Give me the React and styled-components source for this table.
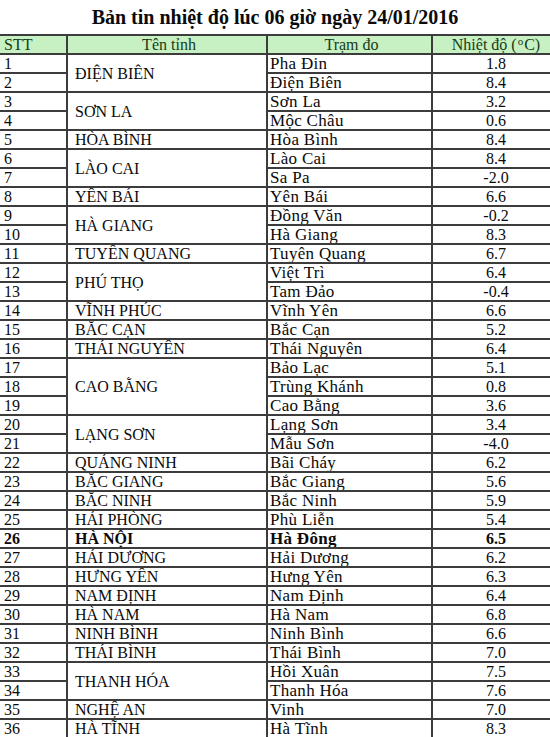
import React from 'react';
import styled, { createGlobalStyle } from 'styled-components';

const GlobalStyle = createGlobalStyle`
  html, body {
    margin: 0;
    padding: 0;
    background: #fff;
    overflow: hidden;
  }
  body {
    font-family: "Liberation Serif", "Times New Roman", serif;
    color: #0a0a0a;
  }
`;

const Page = styled.div`
  width: 550px;
  overflow: hidden;
`;

const Title = styled.h1`
  margin: 0;
  height: 34px;
  display: flex;
  align-items: center;
  justify-content: center;
  font-size: 20px;
  font-weight: bold;
  color: #0a0a0a;
`;

const Grid = styled.div`
  display: grid;
  width: 557px;
  grid-template-columns: 68px 200px 165px 124px;
  grid-template-rows: repeat(37, 19px);
  border-top: 2px solid #3c3c3c;
`;

const Cell = styled.div`
  grid-column: ${(p) => p.$col};
  grid-row: ${(p) => p.$row} / span ${(p) => p.$span || 1};
  box-sizing: border-box;
  border-right: 2px solid #3c3c3c;
  border-bottom: 2px solid #3c3c3c;
  display: flex;
  align-items: ${(p) => (p.$middle ? 'center' : 'flex-end')};
  justify-content: ${(p) => (p.$center ? 'center' : 'flex-start')};
  padding: ${(p) => (p.$middle ? '0 0 0 7px' : '0 0 0 4px')};
  font-size: ${(p) => p.$size || 16}px;
  line-height: 17px;
  font-weight: ${(p) => (p.$bold ? 'bold' : 'normal')};
  white-space: nowrap;
  overflow: hidden;
`;

const HeadCell = styled(Cell)`
  background: #c7f0c3;
  color: #163c16;
  align-items: center;
`;

const Station = styled(Cell)`
  padding-left: 2px;
  letter-spacing: 0.3px;
`;

const HeadText = styled.span`
  display: inline-block;
`;

const Degree = styled.span`
  display: inline-block;
  font-size: 11px;
  line-height: 11px;
  transform: translateY(-5px);
  margin: 0 1px;
`;

const groups = [
  { name: 'ĐIỆN BIÊN', rows: [['Pha Đin', '1.8'], ['Điện Biên', '8.4']] },
  { name: 'SƠN LA', rows: [['Sơn La', '3.2'], ['Mộc Châu', '0.6']] },
  { name: 'HÒA BÌNH', rows: [['Hòa Bình', '8.4']] },
  { name: 'LÀO CAI', rows: [['Lào Cai', '8.4'], ['Sa Pa', '-2.0']] },
  { name: 'YÊN BÁI', rows: [['Yên Bái', '6.6']] },
  { name: 'HÀ GIANG', rows: [['Đồng Văn', '-0.2'], ['Hà Giang', '8.3']] },
  { name: 'TUYÊN QUANG', rows: [['Tuyên Quang', '6.7']] },
  { name: 'PHÚ THỌ', rows: [['Việt Trì', '6.4'], ['Tam Đảo', '-0.4']] },
  { name: 'VĨNH PHÚC', rows: [['Vĩnh Yên', '6.6']] },
  { name: 'BẮC CẠN', rows: [['Bắc Cạn', '5.2']] },
  { name: 'THÁI NGUYÊN', rows: [['Thái Nguyên', '6.4']] },
  { name: 'CAO BẰNG', rows: [['Bảo Lạc', '5.1'], ['Trùng Khánh', '0.8'], ['Cao Bằng', '3.6']] },
  { name: 'LẠNG SƠN', rows: [['Lạng Sơn', '3.4'], ['Mẫu Sơn', '-4.0']] },
  { name: 'QUẢNG NINH', rows: [['Bãi Cháy', '6.2']] },
  { name: 'BẮC GIANG', rows: [['Bắc Giang', '5.6']] },
  { name: 'BẮC NINH', rows: [['Bắc Ninh', '5.9']] },
  { name: 'HẢI PHÒNG', rows: [['Phù Liễn', '5.4']] },
  { name: 'HÀ NỘI', rows: [['Hà Đông', '6.5']], bold: true },
  { name: 'HẢI DƯƠNG', rows: [['Hải Dương', '6.2']] },
  { name: 'HƯNG YÊN', rows: [['Hưng Yên', '6.3']] },
  { name: 'NAM ĐỊNH', rows: [['Nam Định', '6.4']] },
  { name: 'HÀ NAM', rows: [['Hà Nam', '6.8']] },
  { name: 'NINH BÌNH', rows: [['Ninh Bình', '6.6']] },
  { name: 'THÁI BÌNH', rows: [['Thái Bình', '7.0']] },
  { name: 'THANH HÓA', rows: [['Hồi Xuân', '7.5'], ['Thanh Hóa', '7.6']] },
  { name: 'NGHỆ AN', rows: [['Vinh', '7.0']] },
  { name: 'HÀ TĨNH', rows: [['Hà Tĩnh', '8.3']] },
];

export default function App() {
  const cells = [];
  let n = 0;
  groups.forEach((g) => {
    const start = n + 2;
    const single = g.rows.length === 1;
    cells.push(
      <Cell
        key={'p' + g.name}
        $col={2}
        $row={start}
        $span={g.rows.length}
        $middle={!single}
        $bold={g.bold}
        style={single ? { paddingLeft: 7 } : undefined}
      >
        {g.name}
      </Cell>
    );
    g.rows.forEach(([station, temp]) => {
      n += 1;
      const row = n + 1;
      cells.push(
        <Cell key={'s' + n} $col={1} $row={row} $bold={g.bold}>
          {n}
        </Cell>,
        <Station key={'t' + n} $col={3} $row={row} $size={17} $bold={g.bold}>
          {station}
        </Station>,
        <Cell key={'v' + n} $col={4} $row={row} $center $bold={g.bold}>
          {temp}
        </Cell>
      );
    });
  });

  return (
    <Page>
      <GlobalStyle />
      <Title>Bản tin nhiệt độ lúc 06 giờ ngày 24/01/2016</Title>
      <Grid>
        <HeadCell $col={1} $row={1}>STT</HeadCell>
        <HeadCell $col={2} $row={1} $center>Tên tỉnh</HeadCell>
        <HeadCell $col={3} $row={1} $center>Trạm đo</HeadCell>
        <HeadCell $col={4} $row={1} $center>
          <HeadText>
            Nhiệt độ (<Degree>o</Degree>C)
          </HeadText>
        </HeadCell>
        {cells}
      </Grid>
    </Page>
  );
}
